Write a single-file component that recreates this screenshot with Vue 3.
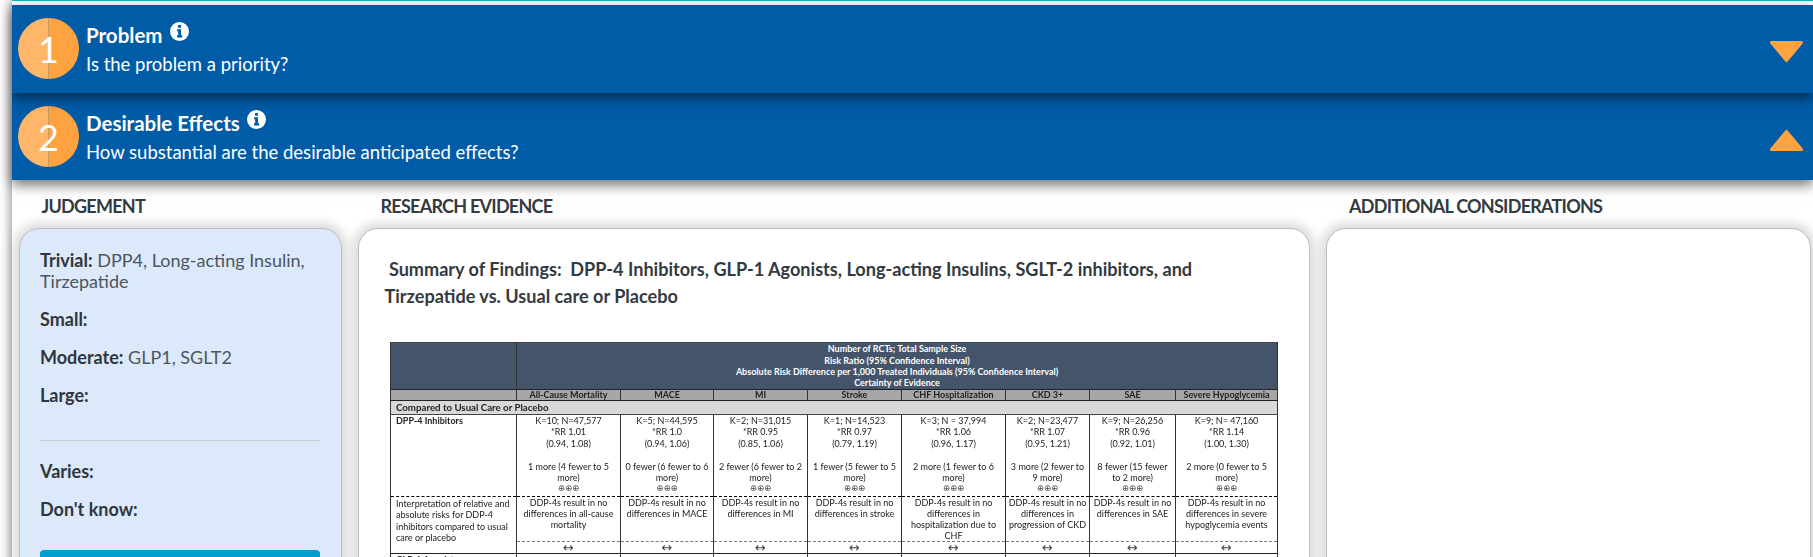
<script setup>
const bands = [
  { n: 1, title: 'Problem', sub: 'Is the problem a priority?', open: false },
  { n: 2, title: 'Desirable Effects', sub: 'How substantial are the desirable anticipated effects?', open: true }
]
const widths = [126, 104, 93, 94, 94, 104, 84, 86, 102]
const outcomes = ['All-Cause Mortality', 'MACE', 'MI', 'Stroke', 'CHF Hospitalization', 'CKD 3+', 'SAE', 'Severe Hypoglycemia']
const data = [
  ['K=10; N=47,577', '*RR 1.01', '(0.94, 1.08)', '1 more (4 fewer to 5 more)'],
  ['K=5; N=44,595', '*RR 1.0', '(0.94, 1.06)', '0 fewer (6 fewer to 6 more)'],
  ['K=2; N=31,015', '*RR 0.95', '(0.85, 1.06)', '2 fewer (6 fewer to 2 more)'],
  ['K=1; N=14,523', '*RR 0.97', '(0.79, 1.19)', '1 fewer (5 fewer to 5 more)'],
  ['K=3; N = 37,994', '*RR 1.06', '(0.96, 1.17)', '2 more (1 fewer to 6 more)'],
  ['K=2; N=23,477', '*RR 1.07', '(0.95, 1.21)', '3 more (2 fewer to 9\u00A0more)'],
  ['K=9; N=26,256', '*RR 0.96', '(0.92, 1.01)', '8 fewer (15 fewer to\u00A02\u00A0more)'],
  ['K=9; N= 47,160', '*RR 1.14', '(1.00, 1.30)', '2 more (0 fewer to 5 more)']
]
const interp = [
  'DDP-4s result in no differences in all-cause mortality',
  'DDP-4s result in no differences in MACE',
  'DDP-4s result in no differences in MI',
  'DDP-4s result in no differences in stroke',
  'DDP-4s result in no differences in hospitalization due to CHF',
  'DDP-4s result in no differences in progression\u00A0of\u00A0CKD',
  'DDP-4s result in no differences in SAE',
  'DDP-4s result in no differences in severe hypoglycemia events'
]
</script>

<template>
  <div class="page">
    <main class="main">
      <header
        v-for="b in bands"
        :key="b.n"
        class="band"
      >
        <div class="num"><span class="num-text">{{ b.n }}</span></div>
        <div class="band-text">
          <div class="band-title">
            {{ b.title }}
            <svg class="info" viewBox="0 0 20 20" aria-hidden="true">
              <circle cx="10" cy="10" r="10" fill="#fff" />
              <rect x="8.4" y="3.2" width="3.2" height="2.8" rx="0.5" fill="#015ca8" />
              <path d="M7.4 7.6h4.2v6.4h1.2v2.2H7.4V14h1.2V9.8H7.4z" fill="#015ca8" />
            </svg>
          </div>
          <div class="band-sub">{{ b.sub }}</div>
        </div>
        <svg class="tri" :class="{ up: b.open }" viewBox="0 0 33 21" aria-hidden="true">
          <polygon
            :points="b.open ? '16.5,1.5 31.5,19.5 1.5,19.5' : '1.5,1.5 31.5,1.5 16.5,19.5'"
            fill="#ffa240"
            stroke="#ffa240"
            stroke-width="3"
            stroke-linejoin="round"
          />
        </svg>
      </header>

      <section class="cols">
        <div class="col">
          <h3 class="col-title">JUDGEMENT</h3>
          <div class="card judge">
            <p><b>Trivial:</b> DPP4, Long-acting Insulin, Tirzepatide</p>
            <p><b>Small:</b></p>
            <p><b>Moderate:</b> GLP1, SGLT2</p>
            <p><b>Large:</b></p>
            <hr class="rule" />
            <p><b>Varies:</b></p>
            <p><b>Don't know:</b></p>
            <div class="btn"></div>
          </div>
        </div>

        <div class="col">
          <h3 class="col-title">RESEARCH EVIDENCE</h3>
          <div class="card evidence">
            <h4 class="sof">&nbsp;Summary of Findings:&nbsp; DPP-4 Inhibitors, GLP-1 Agonists, Long-acting Insulins, SGLT-2 inhibitors, and Tirzepatide vs. Usual care or Placebo</h4>
            <table class="sheet">
              <colgroup>
                <col v-for="(w, i) in widths" :key="i" :width="w" />
              </colgroup>
              <tbody>
                <tr class="r-head">
                  <td></td>
                  <td colspan="8">
                    Number of RCTs; Total Sample Size<br />
                    Risk Ratio (95% Confidence Interval)<br />
                    Absolute Risk Difference per 1,000 Treated Individuals (95% Confidence Interval)<br />
                    Certainty of Evidence
                  </td>
                </tr>
                <tr class="r-out">
                  <td></td>
                  <td v-for="o in outcomes" :key="o">{{ o }}</td>
                </tr>
                <tr class="r-comp">
                  <td colspan="9">Compared to Usual Care or Placebo</td>
                </tr>
                <tr class="r-data">
                  <td class="first"><b>DPP-4 Inhibitors</b></td>
                  <td v-for="(d, i) in data" :key="i">
                    <div>{{ d[0] }}</div>
                    <div>{{ d[1] }}</div>
                    <div>{{ d[2] }}</div>
                    <div class="blank"></div>
                    <div>{{ d[3] }}</div>
                    <div class="cert">⊕⊕⊕</div>
                  </td>
                </tr>
                <tr class="r-int">
                  <td class="first" rowspan="2">Interpretation of relative and absolute risks for DDP-4 inhibitors compared to usual care or placebo</td>
                  <td v-for="(t, i) in interp" :key="i">{{ t }}</td>
                </tr>
                <tr class="r-arrow">
                  <td v-for="i in 8" :key="i">↔</td>
                </tr>
                <tr class="r-next">
                  <td class="first"><b>GLP-1 Agonists</b></td>
                  <td v-for="i in 8" :key="i"></td>
                </tr>
              </tbody>
            </table>
          </div>
        </div>

        <div class="col">
          <h3 class="col-title">ADDITIONAL CONSIDERATIONS</h3>
          <div class="card extra"></div>
        </div>
      </section>
    </main>
  </div>
</template>

<style>
html, body { margin: 0; background: #fff; }
</style>

<style scoped>
.page {
  height: 557px;
  overflow: hidden;
  padding-left: 12px;
  box-sizing: border-box;
  font-family: Lato, "Open Sans", sans-serif;
  color: #333a40;
}
.main {
  min-height: 700px;
  background: #fff;
  box-shadow: -3px 0 9px rgba(0, 0, 0, 0.35);
  border-top: 1px solid #28a9c9;
  padding-top: 4px;
}
.band {
  position: relative;
  display: flex;
  align-items: flex-start;
  height: 88px;
  box-sizing: border-box;
  padding: 13px 10px 0 6px;
  background: #015ca8;
  color: #fff;
  box-shadow: 0 5px 12px rgba(0, 0, 0, 0.55);
}
.band:first-child { z-index: 1; }
.band + .band { height: 87px; }
.num {
  flex: none;
  width: 61px;
  height: 61px;
  border-radius: 50%;
  background: linear-gradient(90deg, #ffb668 0, #ffb668 49%, #c99a5e 49%, #c99a5e 51%, #ffa240 51%, #ffa240 100%);
  display: flex;
  align-items: center;
  justify-content: center;
}
.num-text {
  font-size: 36px;
  font-weight: 400;
  line-height: 1;
  color: #fff;
}
.band-text {
  flex: 1;
  margin-left: 7px;
  padding-top: 3px;
}
.band-title {
  display: flex;
  align-items: flex-start;
  gap: 7px;
  height: 32px;
  font-size: 20.5px;
  font-weight: 700;
  line-height: 28px;
}
.info {
  width: 19px;
  height: 19px;
  margin-top: 0.5px;
}
.band-sub {
  font-size: 18.5px;
  line-height: 24px;
  margin-top: -1px;
}
.tri {
  flex: none;
  width: 33px;
  height: 21px;
  margin-top: 23px;
}
.tri.up { margin-top: 24px; }
.cols {
  position: relative;
  display: grid;
  grid-template-columns: 323px 952.5px 485px;
  column-gap: 16px;
  padding: 0 0 0 6.5px;
}
.col-title {
  margin: 0;
  height: 48px;
  padding: 14px 0 0 23px;
  box-sizing: border-box;
  font-size: 18px;
  letter-spacing: -0.75px;
  line-height: 24px;
  font-weight: 700;
  color: #333a40;
}
.card {
  min-height: 480px;
  box-sizing: border-box;
  border: 1px solid #bdbdbd;
  border-radius: 20px;
  background: #fff;
  box-shadow: 0 0 10px 6px rgba(0, 0, 0, 0.13);
}
.judge {
  background: #dce9fa;
  padding: 21px 20.5px 0;
  font-size: 18px;
  line-height: 21px;
  color: #4c565f;
}
.judge p { margin: 0 0 17px; }
.judge b { color: #30363c; font-weight: 700; }
.rule {
  margin: 34px 0 20px;
  border: 0;
  border-top: 1px solid #c9cbce;
}
.btn {
  margin-top: 30px;
  height: 60px;
  border-radius: 4px;
  background: #009fd1;
}
.evidence { padding: 27px 32px 0 26px; }
.sof {
  margin: 0 0 32px;
  font-size: 18.1px;
  line-height: 27px;
  font-weight: 700;
  color: #333a40;
}
.sheet {
  margin-left: 5.5px;
  width: 887px;
  table-layout: fixed;
  border-collapse: collapse;
  font-size: 9px;
  line-height: 11.4px;
  color: #222;
  filter: blur(0.35px);
  text-align: center;
}
.sheet td {
  border-left: 1px solid #333;
  border-right: 1px solid #333;
  padding: 0 2px;
  overflow: hidden;
}
.r-head td {
  height: 46px;
  background: #44546a;
  color: #fff;
  font-weight: 700;
  border-top: 1px solid #444;
}
.r-out td {
  height: 10px;
  background: #a6a6a6;
  font-weight: 700;
  border-top: 1px solid #222;
  border-bottom: 1px solid #222;
  line-height: 10px;
}
.r-comp td {
  height: 13px;
  background: #d9d9d9;
  font-weight: 700;
  text-align: left;
  font-size: 9.7px;
  padding-left: 5px;
  border-bottom: 1px solid #444;
}
.r-data td {
  height: 81px;
  vertical-align: top;
  border-bottom: 1px dashed #000;
}
.r-data .first,
.r-int .first,
.r-next .first {
  text-align: left;
  padding-left: 5px;
}
.blank { height: 11.4px; }
.cert { font-family: "DejaVu Sans", sans-serif; font-size: 8.5px; color: #444; }
.r-int td {
  height: 44px;
  line-height: 11.1px;
  vertical-align: top;
  border-bottom: 1px dashed #777;
}
.r-int .first { border-bottom: 1px solid #222; padding-top: 1px; line-height: 11.4px; }
.r-arrow td {
  height: 11px;
  line-height: 11px;
  border-bottom: 1px solid #222;
  font-family: "DejaVu Sans", sans-serif;
  font-size: 13px;
  color: #444;
}
.r-next td {
  height: 30px;
  vertical-align: top;
}
</style>
